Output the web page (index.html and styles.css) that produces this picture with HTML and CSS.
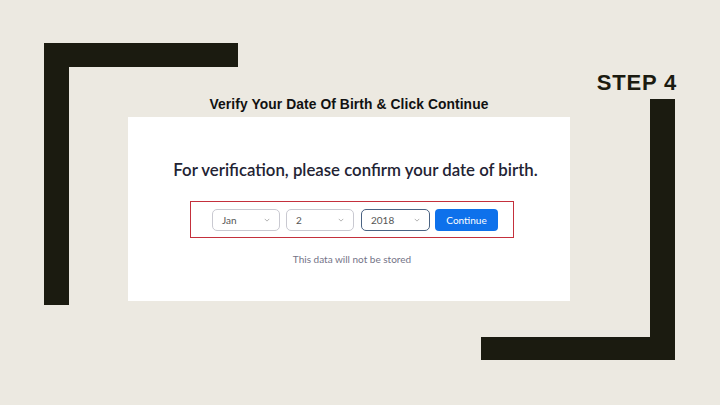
FILE: index.html
```html
<!DOCTYPE html>
<html>
<head>
<meta charset="utf-8">
<link rel="stylesheet" href="styles.css">
</head>
<body>
<div class="stage">
  <div class="bracket bracket-tl"></div>
  <div class="bracket bracket-br"></div>
  <div class="step">STEP 4</div>
  <div class="content">
    <h1 class="heading">Verify Your Date Of Birth &amp; Click Continue</h1>
    <div class="panel">
      <h2 class="panel-title">For verification, please confirm your date of birth.</h2>
      <div class="highlight">
        <div class="select"><span>Jan</span><svg class="chev" viewBox="0 0 8 5" width="6" height="4"><path d="M1 1l3 3 3-3" fill="none" stroke="#999" stroke-width="1"/></svg></div>
        <div class="select"><span>2</span><svg class="chev" viewBox="0 0 8 5" width="6" height="4"><path d="M1 1l3 3 3-3" fill="none" stroke="#999" stroke-width="1"/></svg></div>
        <div class="select select-focus"><span>2018</span><svg class="chev" viewBox="0 0 8 5" width="6" height="4"><path d="M1 1l3 3 3-3" fill="none" stroke="#999" stroke-width="1"/></svg></div>
        <button class="btn">Continue</button>
      </div>
      <p class="note">This data will not be stored</p>
    </div>
  </div>
</div>
</body>
</html>
```
FILE: styles.css
```css
html, body {
  margin: 0;
  padding: 0;
  background: #ece9e1;
}
.stage {
  width: 720px;
  height: 405px;
  display: grid;
  grid-template-columns: 44px 84px 110px 243px 89px 105px 45px;
  grid-template-rows: 43px 56px 206px 55px 45px;
  background: #ece9e1;
  overflow: hidden;
}
.bracket {
  box-sizing: border-box;
}
.bracket-tl {
  grid-column: 2 / 4;
  grid-row: 2 / 4;
  border-top: 24px solid #1b1b10;
  border-left: 25px solid #1b1b10;
}
.bracket-br {
  grid-column: 5 / 7;
  grid-row: 3 / 5;
  border-right: 25px solid #1b1b10;
  border-bottom: 23px solid #1b1b10;
}
.step {
  grid-column: 6 / 8;
  grid-row: 2 / 3;
  justify-self: end;
  padding: 27px 43px 0 0;
  font-family: "Liberation Sans", Arial, sans-serif;
  font-weight: bold;
  font-size: 22px;
  line-height: 25px;
  color: #1b1b10;
  letter-spacing: 0.8px;
}
.content {
  grid-column: 3 / 6;
  grid-row: 2 / 4;
  display: flex;
  flex-direction: column;
  justify-content: flex-end;
  align-items: center;
  padding-bottom: 4px;
}
.heading {
  margin: 0 0 4px 0;
  font-family: "Liberation Sans", Arial, sans-serif;
  font-weight: bold;
  font-size: 13.8px;
  line-height: 17px;
  color: #111;
  letter-spacing: 0.1px;
}
.panel {
  width: 442px;
  height: 184px;
  background: #fff;
  display: flex;
  flex-direction: column;
  align-items: center;
  box-sizing: border-box;
  padding-top: 42px;
}
.panel-title {
  margin: 0 0 0 13px;
  font-family: Lato, "Open Sans", sans-serif;
  font-weight: 600;
  font-size: 16.8px;
  line-height: 21px;
  color: #232333;
}
.highlight {
  box-sizing: border-box;
  width: 324px;
  height: 37px;
  margin: 21px 0 0 6px;
  border: 1.5px solid #c4303c;
  display: flex;
  align-items: center;
  gap: 6px;
  padding-left: 21px;
}
.select {
  box-sizing: border-box;
  width: 68px;
  height: 22px;
  border: 1px solid #c9c9d1;
  border-radius: 5px;
  display: flex;
  align-items: center;
  justify-content: space-between;
  padding: 0 9px 0 9px;
  font-family: Lato, "Open Sans", sans-serif;
  font-size: 10px;
  color: #555;
}
.select-focus {
  width: 69px;
  border-color: #4a6383;
  margin-left: 1px;
}
.chev {
  display: block;
}
.btn {
  box-sizing: border-box;
  width: 63px;
  height: 22px;
  border: none;
  border-radius: 4px;
  background: #0e71eb;
  color: #fff;
  font-family: Lato, "Open Sans", sans-serif;
  font-size: 10px;
  padding: 0;
  margin-left: -1px;
}
.note {
  margin: 15px 0 0 6px;
  font-family: Lato, "Open Sans", sans-serif;
  font-size: 10px;
  line-height: 12px;
  color: #747487;
}
```
